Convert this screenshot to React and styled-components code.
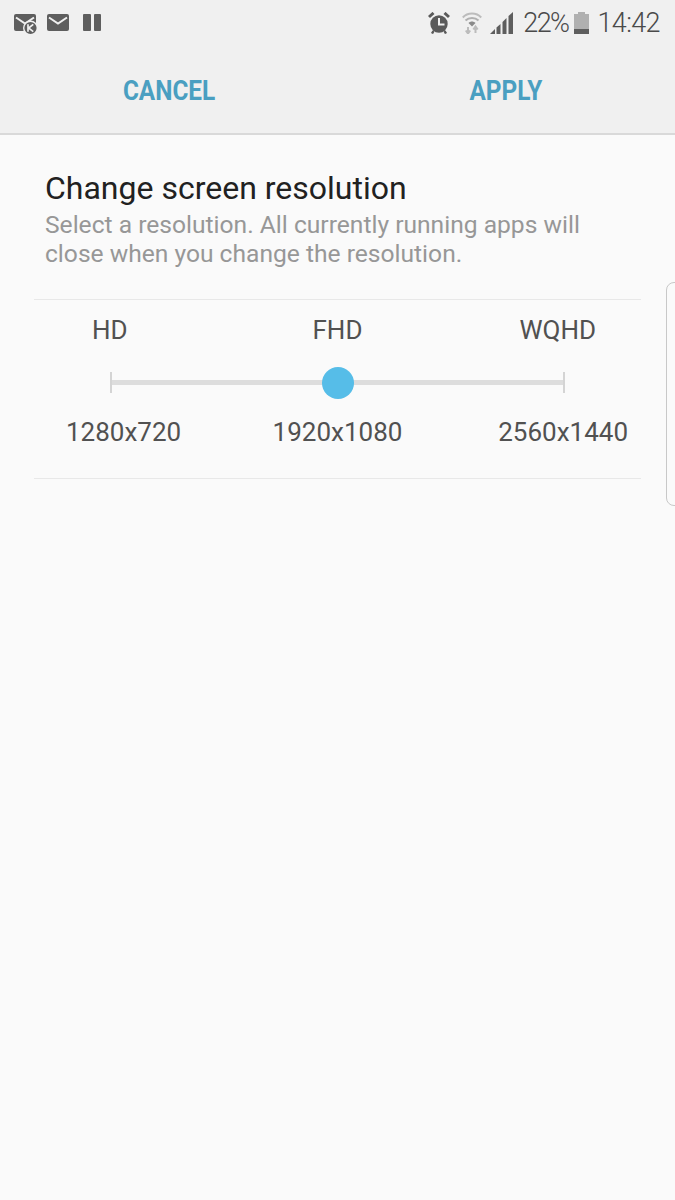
import React from "react"
import styled, { createGlobalStyle } from "styled-components"

const GlobalStyle = createGlobalStyle`
  html, body {
    margin: 0;
    padding: 0;
    background: #fafafa;
  }
  body {
    font-family: Roboto, "Liberation Sans", sans-serif;
  }
`

const MailIcon = ({ badge }) => (
  <StatusSvg width="24" height="24" viewBox="0 0 24 24">
    <rect x="1" y="3" width="22" height="17" rx="2" fill="#5e5e5e" />
    <path d="M3 6.5 L12 12.5 L21 6.5" fill="none" stroke="#f0f0f0" strokeWidth="2" />
    {badge && (
      <>
        <circle cx="17.5" cy="17" r="6.8" fill="#5e5e5e" stroke="#f0f0f0" strokeWidth="1.4" />
        <path d="M15 13.3 V20.7 M20.3 13.3 L15.6 17 L20.3 20.7" fill="none" stroke="#f0f0f0" strokeWidth="1.7" />
      </>
    )}
  </StatusSvg>
)

const PauseIcon = () => (
  <StatusSvg width="24" height="24" viewBox="0 0 24 24">
    <rect x="4" y="3" width="8" height="17" rx="1" fill="#5e5e5e" />
    <rect x="15" y="3" width="7" height="17" rx="1" fill="#5e5e5e" />
  </StatusSvg>
)

const AlarmIcon = () => (
  <StatusSvg width="22" height="22" viewBox="0 0 22 22">
    <circle cx="11" cy="12" r="8.7" fill="#5a5a5a" />
    <path d="M1 5 L5.5 1 M21 5 L16.5 1" stroke="#5a5a5a" strokeWidth="3" fill="none" />
    <path d="M5.5 19 L4 21.5 M16.5 19 L18 21.5" stroke="#5a5a5a" strokeWidth="2.4" fill="none" />
    <path d="M11 6 V12.5 H16.5" stroke="#f0f0f0" strokeWidth="2" fill="none" />
  </StatusSvg>
)

const WifiIcon = () => (
  <StatusSvg $ml={12} width="20" height="22" viewBox="0 0 20 22">
    <path d="M0.8 5.5 C5.5 0.3 14.5 0.3 19.2 5.5" stroke="#bcbcbc" strokeWidth="2" fill="none" />
    <path d="M3.5 8.5 C7 5 13 5 16.5 8.5" stroke="#b0b0b0" strokeWidth="2" fill="none" />
    <path d="M6.5 11 C8.5 9 11.5 9 13.5 11 L10 14.5 Z" fill="#8a8a8a" />
    <path d="M6 15 V21 M3.8 18.5 L6 21.5 L8.2 18.5" stroke="#bcbcbc" strokeWidth="2" fill="none" />
    <path d="M13.5 21 V15 M11.3 17.5 L13.5 14.5 L15.7 17.5" stroke="#bcbcbc" strokeWidth="2" fill="none" />
  </StatusSvg>
)

const SignalIcon = () => (
  <StatusSvg $ml={8} width="23" height="22" viewBox="0 0 23 22">
    <path d="M0 22 L5 17 V22 Z" fill="#5e5e5e" />
    <path d="M6.5 15.5 L10.5 12 V22 H6.5 Z" fill="#5e5e5e" />
    <path d="M12.5 10 L16.5 6 V22 H12.5 Z" fill="#5e5e5e" />
    <path d="M18.5 4 L23 0 V22 H18.5 Z" fill="#5e5e5e" />
  </StatusSvg>
)

const BatteryIcon = () => (
  <StatusSvg $ml={6} width="15" height="22" viewBox="0 0 15 22">
    <rect x="4" y="0" width="7" height="3" fill="#b0b0b0" />
    <rect x="0" y="2" width="15" height="20" fill="#b0b0b0" />
    <rect x="0" y="17" width="15" height="5" fill="#5e5e5e" />
  </StatusSvg>
)

const App = () => (
  <Page>
    <GlobalStyle />
    <Header>
      <StatusBar>
        <StatusGroup>
          <MailIcon badge />
          <MailIcon />
          <PauseIcon />
        </StatusGroup>
        <RightStatus>
          <AlarmIcon />
          <WifiIcon />
          <SignalIcon />
          <StatusText $ml={10} $spacing={-1.6}>22%</StatusText>
          <BatteryIcon />
          <StatusText $ml={8} $spacing={-0.6}>14:42</StatusText>
        </RightStatus>
      </StatusBar>
      <ActionBar>
        <ActionButton>
          <span>CANCEL</span>
        </ActionButton>
        <ActionButton>
          <span>APPLY</span>
        </ActionButton>
      </ActionBar>
    </Header>
    <Content>
      <Title>Change screen resolution</Title>
      <Description>
        Select a resolution. All currently running apps will
        <br />
        close when you change the resolution.
      </Description>
      <SliderPanel>
        <LabelRow $left={58} $right={45}>
          <Label>HD</Label>
          <Label>FHD</Label>
          <Label>WQHD</Label>
        </LabelRow>
        <Track>
          <Thumb />
        </Track>
        <LabelRow $left={32} $right={13}>
          <Label>1280x720</Label>
          <Label>1920x1080</Label>
          <Label>2560x1440</Label>
        </LabelRow>
      </SliderPanel>
      <EdgeHandle />
    </Content>
  </Page>
)

const Page = styled.div`
  width: 675px;
  height: 1200px;
  display: flex;
  flex-direction: column;
  overflow: hidden;
  background: #fafafa;
`

const Header = styled.header`
  background: #f0f0f0;
  border-bottom: 2px solid #d9d9d9;
`

const StatusBar = styled.div`
  height: 46px;
  display: flex;
  justify-content: space-between;
  align-items: center;
  padding: 0 15px 0 13px;
`

const StatusGroup = styled.div`
  display: flex;
  align-items: center;
  gap: 9px;
`

const RightStatus = styled.div`
  display: flex;
  align-items: center;
`

const StatusSvg = styled.svg`
  display: block;
  flex: none;
  margin-left: ${p => p.$ml || 0}px;
`

const StatusText = styled.span`
  margin-left: ${p => p.$ml}px;
  font-size: 27px;
  font-weight: 300;
  line-height: 30px;
  letter-spacing: ${p => p.$spacing}px;
  color: #4a4a4a;
`

const ActionBar = styled.div`
  height: 87px;
  display: grid;
  grid-template-columns: 1fr 1fr;
`

const ActionButton = styled.div`
  display: flex;
  align-items: center;
  justify-content: center;
  font-size: 28px;
  font-weight: 700;
  color: #4a9fc1;
  padding-top: 2px;

  span {
    display: inline-block;
    transform: scaleX(0.87);
  }
`

const Content = styled.main`
  position: relative;
  flex: 1;
  padding-top: 33px;
`

const Title = styled.h1`
  margin: 0 0 3px 45px;
  font-size: 32px;
  line-height: 40px;
  font-weight: 400;
  color: #212121;
`

const Description = styled.p`
  margin: 0 0 0 45px;
  font-size: 24.6px;
  line-height: 28.5px;
  color: #979797;
`

const SliderPanel = styled.section`
  margin: 31px 34px 0;
  height: 178px;
  border-top: 1px solid #e8e8e8;
  border-bottom: 1px solid #e8e8e8;
`

const LabelRow = styled.div`
  display: grid;
  grid-template-columns: minmax(0, 1fr) auto minmax(0, 1fr);
  padding-top: 14px;

  & > :first-child {
    justify-self: start;
    margin-left: ${p => p.$left}px;
  }

  & > :last-child {
    justify-self: end;
    margin-right: ${p => p.$right}px;
  }
`

const Label = styled.span`
  font-size: 26px;
  line-height: 32px;
  white-space: nowrap;
  color: #515151;
`

const Track = styled.div`
  position: relative;
  height: 5px;
  margin: 34px 76px 17px;
  display: flex;
  justify-content: center;
  align-items: center;
  background: #dddddd;

  &::before,
  &::after {
    content: "";
    position: absolute;
    top: -8px;
    width: 2px;
    height: 21px;
    background: #d4d4d4;
  }
  &::before {
    left: 0;
  }
  &::after {
    right: 0;
  }
`

const Thumb = styled.div`
  width: 32px;
  height: 32px;
  flex: none;
  border-radius: 50%;
  background: #56bde8;
`

const EdgeHandle = styled.div`
  position: absolute;
  top: 147px;
  right: -12px;
  width: 19px;
  height: 222px;
  border: 1px solid #c8c8c8;
  border-radius: 8px;
`

export default App
